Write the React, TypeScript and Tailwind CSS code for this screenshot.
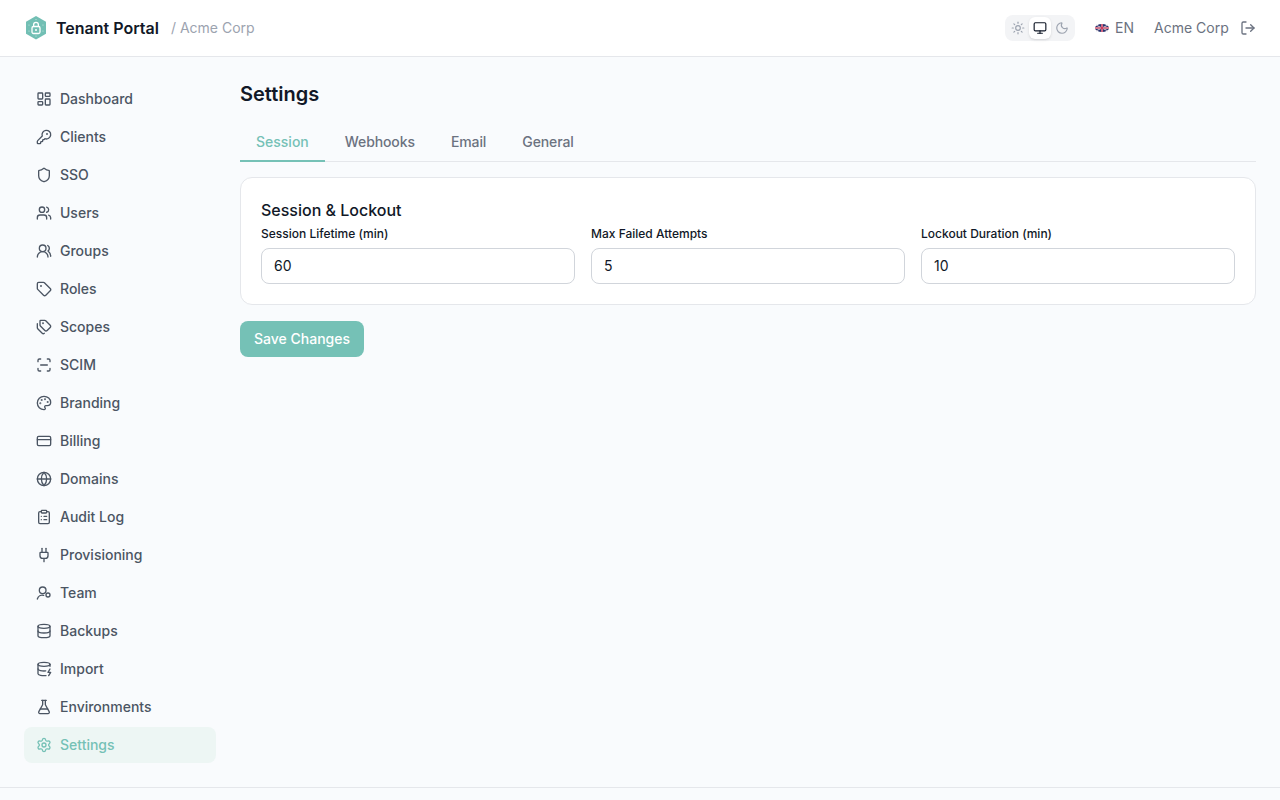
import type { SVGProps } from "react";
import {
  ClipboardList,
  CreditCard,
  Database,
  DatabaseZap,
  FlaskConical,
  Globe,
  KeyRound,
  LayoutDashboard,
  LogOut,
  Monitor,
  Moon,
  Palette,
  Plug,
  ScanLine,
  Settings,
  Shield,
  Sun,
  Tag,
  Tags,
  Users,
  UsersRound,
} from "lucide-react";

function TeamIcon(props: SVGProps<SVGSVGElement> & { size?: number }) {
  const { size = 16, ...rest } = props;
  return (
    <svg
      width={size}
      height={size}
      viewBox="0 0 24 24"
      fill="none"
      stroke="currentColor"
      strokeWidth="2"
      strokeLinecap="round"
      strokeLinejoin="round"
      {...rest}
    >
      <circle cx="10" cy="8" r="5" />
      <circle cx="18" cy="15" r="3" />
      <path d="M2 21a8 8 0 0 1 9.5-5.5" />
    </svg>
  );
}

const NAV_ITEMS = [
  { label: "Dashboard", icon: LayoutDashboard },
  { label: "Clients", icon: KeyRound },
  { label: "SSO", icon: Shield },
  { label: "Users", icon: Users },
  { label: "Groups", icon: UsersRound },
  { label: "Roles", icon: Tag },
  { label: "Scopes", icon: Tags },
  { label: "SCIM", icon: ScanLine },
  { label: "Branding", icon: Palette },
  { label: "Billing", icon: CreditCard },
  { label: "Domains", icon: Globe },
  { label: "Audit Log", icon: ClipboardList },
  { label: "Provisioning", icon: Plug },
  { label: "Team", icon: TeamIcon },
  { label: "Backups", icon: Database },
  { label: "Import", icon: DatabaseZap },
  { label: "Environments", icon: FlaskConical },
  { label: "Settings", icon: Settings, active: true },
];

const TABS = ["Webhooks", "Email", "General"];

const FIELDS = [
  { label: "Session Lifetime (min)", value: "60" },
  { label: "Max Failed Attempts", value: "5" },
  { label: "Lockout Duration (min)", value: "10" },
];

function Logo() {
  return (
    <svg width="24" height="24" viewBox="0 0 24 24" className="shrink-0">
      <path d="M12 0 22 5.8v11.9L12 23.5 2 17.7V5.8z" fill="#72bfb4" />
      <rect x="8" y="10.5" width="8" height="7" rx="1.5" fill="none" stroke="#fff" strokeWidth="1.3" />
      <path d="M9.6 10.5V8.8a2.4 2.4 0 0 1 4.8 0v1.7" fill="none" stroke="#fff" strokeWidth="1.3" />
      <circle cx="12" cy="14" r="1" fill="#fff" />
      <g fill="#c9e7e2">
        <circle cx="5" cy="9" r="0.6" />
        <circle cx="19" cy="9" r="0.6" />
        <circle cx="5" cy="15" r="0.6" />
        <circle cx="19" cy="15" r="0.6" />
        <circle cx="12" cy="3.5" r="0.6" />
        <circle cx="12" cy="20" r="0.6" />
      </g>
    </svg>
  );
}

function Flag() {
  return (
    <svg width="14" height="8" viewBox="0 0 14 8" className="shrink-0">
      <ellipse cx="7" cy="4" rx="7" ry="4" fill="#28346f" />
      <path d="M1 1 13 7M13 1 1 7" stroke="#d9cfd6" strokeWidth="1" />
      <path d="M7 0v8M0 4h14" stroke="#e8dfe3" strokeWidth="2" />
      <path d="M7 0v8M0 4h14" stroke="#c0163f" strokeWidth="1.2" />
    </svg>
  );
}

export default function App() {
  return (
    <div className="flex h-screen flex-col overflow-hidden bg-[#f9fbfd] font-['Inter',sans-serif] text-[#111827]">
      <header className="flex h-[57px] shrink-0 items-center justify-between border-b border-[#e5e7eb] bg-white px-6">
        <div className="flex items-center">
          <Logo />
          <span className="ml-2 text-base font-semibold">Tenant Portal</span>
          <span className="ml-3 text-sm text-[#9ca3af]">/ Acme Corp</span>
        </div>
        <div className="flex items-center">
          <div className="flex items-center rounded-lg bg-[#f3f4f6] p-0.5">
            <span className="flex h-[22px] w-[22px] items-center justify-center text-[#9ca3af]">
              <Sun size={14} />
            </span>
            <span className="flex h-[22px] w-[22px] items-center justify-center rounded-md bg-white text-[#111827] shadow-sm">
              <Monitor size={14} />
            </span>
            <span className="flex h-[22px] w-[22px] items-center justify-center text-[#9ca3af]">
              <Moon size={14} />
            </span>
          </div>
          <div className="ml-5 flex items-center gap-1.5 text-sm text-[#6b7280]">
            <Flag />
            EN
          </div>
          <span className="ml-5 w-[74px] text-sm whitespace-nowrap text-[#6b7280]">Acme Corp</span>
          <LogOut size={16} className="ml-3 text-[#6b7280]" />
        </div>
      </header>

      <div className="flex min-h-0 flex-1">
        <aside className="flex w-[240px] shrink-0 flex-col gap-0.5 px-6 pt-6">
          {NAV_ITEMS.map(({ label, icon: Icon, active }) => (
            <div
              key={label}
              className={
                active
                  ? "flex h-9 items-center gap-2 rounded-lg bg-[#edf6f4] px-3 text-sm font-medium text-[#75c1b6]"
                  : "flex h-9 items-center gap-2 rounded-lg px-3 text-sm font-medium text-[#4b5563]"
              }
            >
              <Icon size={16} />
              {label}
            </div>
          ))}
        </aside>

        <main className="min-w-0 flex-1 pt-6 pr-6">
          <h1 className="text-xl leading-[26px] font-semibold">Settings</h1>
          <div className="mt-[17px] flex border-b border-[#e5e7eb]">
            <div className="mb-[-1px] border-b-2 border-[#75c1b6] px-4 py-2 text-sm font-medium text-[#75c1b6]">
              Session
            </div>
            <div className="ml-1 flex gap-1">
              {TABS.map((tab) => (
                <div key={tab} className="px-4 py-2 text-sm font-medium tracking-[-0.1px] text-[#6b7280]">
                  {tab}
                </div>
              ))}
            </div>
          </div>

          <section className="mt-[15px] rounded-xl border border-[#e5e7eb] bg-white p-5">
            <h2 className="mb-1 text-base leading-6 font-medium">Session &amp; Lockout</h2>
            <div className="grid grid-cols-3 gap-4">
              {FIELDS.map((field) => (
                <div key={field.label}>
                  <label className="block text-xs leading-4 font-medium">{field.label}</label>
                  <input
                    readOnly
                    value={field.value}
                    className="mt-1.5 h-9 w-full rounded-lg border border-[#d1d5db] bg-white px-3 pb-0.5 text-sm text-[#111827]"
                  />
                </div>
              ))}
            </div>
          </section>

          <button className="mt-4 flex h-9 items-center rounded-lg bg-[#75c1b6] px-3.5 text-sm font-medium text-white">
            Save Changes
          </button>
        </main>
      </div>

      <footer className="h-[13px] shrink-0 border-t border-[#e5e7eb]" />
    </div>
  );
}
